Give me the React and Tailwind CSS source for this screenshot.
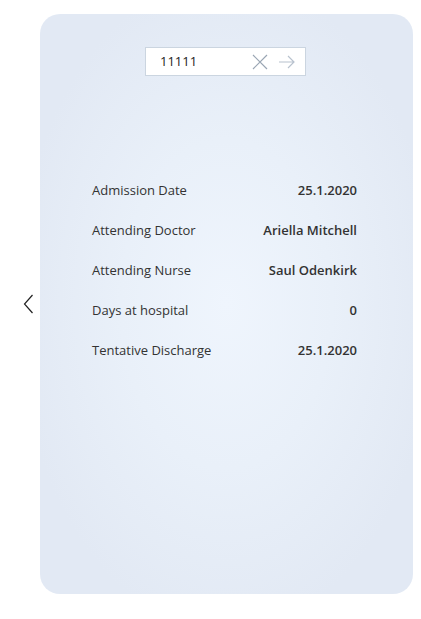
export default function App() {
  const rows = [
    ["Admission Date", "25.1.2020"],
    ["Attending Doctor", "Ariella Mitchell"],
    ["Attending Nurse", "Saul Odenkirk"],
    ["Days at hospital", "0"],
    ["Tentative Discharge", "25.1.2020"],
  ];
  return (
    <div className="w-[421px] h-[619px] bg-white flex pt-[14px]" style={{ fontFamily: '"Segoe UI", "Open Sans", "Noto Sans", sans-serif' }}>
      <div className="w-[40px] h-[580px] flex items-center">
        <svg width="12" height="20" viewBox="0 0 12 20" className="ml-[23px]">
          <path d="M9.5 1 L1.5 10 L9.5 19" fill="none" stroke="#222" strokeWidth="1.2" />
        </svg>
      </div>
      <div className="w-[373px] h-[580px] rounded-[20px] bg-[radial-gradient(ellipse_at_50%_50%,#eff5fd_0%,#e9f0f9_40%,#e2e9f4_80%)] flex flex-col items-center pt-[33px]">
        <div className="w-[161px] h-[29px] bg-white border border-[#cbd5e0] flex items-center pl-[14px] pr-[9px] ml-[-2px]">
          <span className="text-[13px] text-[#222] flex-1 leading-none">11111</span>
          <svg width="18" height="18" viewBox="0 0 18 18" className="mr-[9px]">
            <path d="M2 2 L16 16 M16 2 L2 16" stroke="#9aa6b4" strokeWidth="1.2" fill="none" />
          </svg>
          <svg width="18" height="14" viewBox="0 0 18 14">
            <path d="M1 7 H16 M10 1 L16 7 L10 13" stroke="#b8c2ce" strokeWidth="1.2" fill="none" />
          </svg>
        </div>
        <div className="w-full pl-[52px] pr-[56px] mt-[105px] flex flex-col gap-[20px]">
          {rows.map(([l, v]) => (
            <div key={l} className="flex justify-between items-center h-[20px] text-[13px] text-[#333]">
              <span>{l}</span>
              <span className="font-semibold">{v}</span>
            </div>
          ))}
        </div>
      </div>
    </div>
  );
}
